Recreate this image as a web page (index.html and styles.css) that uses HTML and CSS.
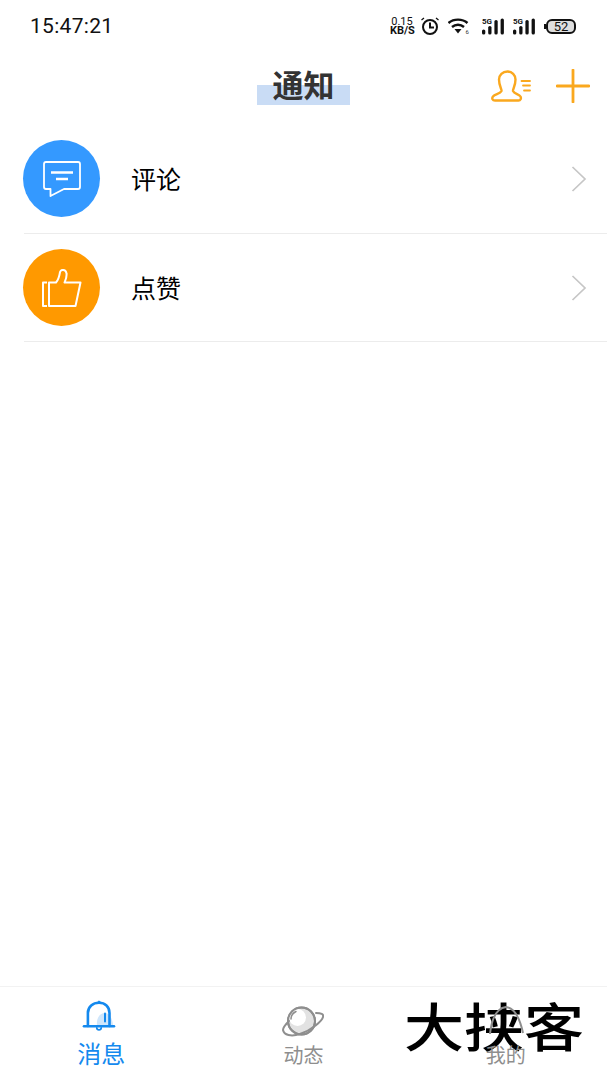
FILE: index.html
```html
<!DOCTYPE html>
<html>
<head>
  <title>通知</title>
  <meta name="viewport" content="width=device-width, initial-scale=1">
  <link rel="stylesheet" href="styles.css">
</head>
<body>
  <div class="page">
    <div class="status-bar">
      <span class="time">15:47:21</span>
      <div class="status-icons">
        <span class="speed">0.15<br><b>KB/S</b></span>
        <svg class="alarm" width="18" height="18" viewBox="0 0 18 18" fill="none" stroke="#111" stroke-width="2">
          <circle cx="9" cy="10" r="7"/>
          <path d="M9 5.500V10.500H13"/>
          <path d="M0.500 3L3 1M17.500 3L15 1" stroke-width="1.300"/>
        </svg>
        <svg class="wifi" width="22" height="17" viewBox="0 0 22 17" fill="none" stroke="#111" stroke-width="2.400">
          <path d="M0.500 5C5.500 0.500 14.500 0.500 19.500 5"/>
          <path d="M4 9C7.500 6 12.500 6 16 9"/>
          <path d="M6.500 11H13.500L10 15.500Z" fill="#111" stroke="none"/>
          <text x="17.500" y="16" class="wifi-label" fill="#333" stroke="none">6</text>
        </svg>
        <svg class="signal" width="22" height="17" viewBox="0 0 22 17">
          <text x="0" y="6" class="sig-label">5G</text>
          <rect x="0" y="11.500" width="3.300" height="5" rx="1.600"/>
          <rect x="6.200" y="8" width="3.300" height="8.500" rx="1.600"/>
          <rect x="12.400" y="2" width="3.300" height="14.500" rx="1.600"/>
          <rect x="18.600" y="0.500" width="3.300" height="16" rx="1.600"/>
        </svg>
        <svg class="signal signal-second" width="22" height="17" viewBox="0 0 22 17">
          <text x="0" y="6" class="sig-label">5G</text>
          <rect x="0" y="11.500" width="3.300" height="5" rx="1.600"/>
          <rect x="6.200" y="8" width="3.300" height="8.500" rx="1.600"/>
          <rect x="12.400" y="2" width="3.300" height="14.500" rx="1.600"/>
          <rect x="18.600" y="0.500" width="3.300" height="16" rx="1.600"/>
        </svg>
        <span class="battery"><span class="battery-num">52</span></span>
      </div>
    </div>

    <div class="header">
      <h1 class="title"><span>通知</span></h1>
      <div class="header-actions">
        <svg width="40" height="33" viewBox="0 0 40 33" fill="none" stroke="#faa81e" stroke-width="2.400" stroke-linecap="round" stroke-linejoin="round">
          <path d="M4 30.500C1.500 30.500 0.500 28.500 2 26.500C4 24 9 24 10.500 21C11 19.500 8 16 8 9.500C8 5 11.500 1.500 16.500 1.500C21 1.500 24.500 5 24.500 9.500C24.500 16 21.500 19.500 22 21C23.500 24 28 24 29.500 26.500C30.500 28.500 29.500 30.500 27.500 30.500Z"/>
          <path d="M30.500 11H39M32 15.500H39M33 20.500H39" stroke-width="1.800"/>
        </svg>
        <svg width="34" height="34" viewBox="0 0 34 34" fill="none" stroke="#faa81e" stroke-width="2.800" stroke-linecap="round">
          <path d="M17 1V33M1 17H33"/>
        </svg>
      </div>
    </div>

    <div class="list">
      <div class="row">
        <div class="badge badge-blue">
          <svg width="38" height="36" viewBox="0 0 38 36" fill="none" stroke="#fff" stroke-width="1.800" stroke-linejoin="round">
            <path d="M3 1H35Q37 1 37 3V26Q37 28 35 28H21L7.500 35V28H3Q1 28 1 26V3Q1 1 3 1Z"/>
            <path d="M8 11.500H30M13 18H25" stroke-width="2.400"/>
          </svg>
        </div>
        <span class="row-label">评论</span>
        <svg class="chevron" width="16" height="26" viewBox="0 0 16 26" fill="none" stroke="#c6c6c6" stroke-width="1.700">
          <path d="M1.500 1L14 13L1.500 25"/>
        </svg>
      </div>
      <div class="row">
        <div class="badge badge-orange">
          <svg width="40" height="38" viewBox="0 0 40 38" fill="none" stroke="#fff" stroke-width="2" stroke-linejoin="round">
            <path d="M5 13.500H1V37H5"/>
            <path d="M7 13.500H14C17 10 17.500 6 18 3C19 0 24 0 24.500 4.500C25 8 23.500 11 22.500 13.500H38.500L33.500 37H7Z"/>
          </svg>
        </div>
        <span class="row-label">点赞</span>
        <svg class="chevron" width="16" height="26" viewBox="0 0 16 26" fill="none" stroke="#c6c6c6" stroke-width="1.700">
          <path d="M1.500 1L14 13L1.500 25"/>
        </svg>
      </div>
    </div>

    <div class="tabbar">
      <span class="watermark">大挟客</span>
      <div class="tab tab-active">
        <svg class="bell" width="34" height="34" viewBox="0 0 34 34" fill="none" stroke="#1489ee" stroke-width="2.600" stroke-linecap="round">
          <path d="M15 26C14 18 18 13 23 13C28 13 31 20 31 26Z" fill="#cfe6fb" stroke="none"/>
          <path d="M5.900 26V13C5.900 6.500 11 2.800 17 2.800C23 2.800 27.500 6.500 27.500 13V26"/>
          <path d="M2 26.200H32"/>
          <path d="M23 13.500V21.500" stroke-width="2"/>
          <circle cx="17" cy="1.800" r="0.800" fill="#1489ee" stroke-width="1"/>
          <path d="M14.800 28C15 30.500 19 30.500 19.200 28" stroke-width="1.800"/>
        </svg>
        <span class="tab-label">消息</span>
      </div>
      <div class="tab tab-mid">
        <svg width="42" height="34" viewBox="0 0 42 34" fill="none" stroke="#8e8e8e" stroke-width="2">
          <circle cx="19.500" cy="16" r="13.500" fill="#e2e2e2"/>
          <circle cx="15.500" cy="12.500" r="8.500" fill="#fff" stroke="none"/>
          <circle cx="19.500" cy="16" r="13.500"/>
          <path d="M34 8C39 8 42 9 41 12C40 16 30 25 18 29C9 32 2 30 1 25C1 22 4 19 7 16" stroke-linecap="round"/>
          <path d="M9 14C9 11 11 8 14 6.500" stroke-width="1.500" stroke-linecap="round"/>
        </svg>
        <span class="tab-label">动态</span>
      </div>
      <div class="tab tab-mid">
        <svg width="42" height="34" viewBox="0 0 42 34" fill="none" stroke="#8e8e8e" stroke-width="2">
          <path d="M5 29C7 11 12 3 21 2C30 3 35 14 38 28"/>
        </svg>
        <span class="tab-label">我的</span>
      </div>
    </div>
  </div>
</body>
</html>
```

FILE: styles.css
```css
* {
  box-sizing: border-box;
}

body {
  margin: 0;
  background: #fff;
  font-family: "Noto Sans CJK SC", "Noto Sans", sans-serif;
}

.page {
  display: flex;
  flex-direction: column;
  height: 1080px;
  overflow: hidden;
}

.status-bar {
  display: flex;
  align-items: center;
  justify-content: space-between;
  height: 52px;
  padding: 0 31px 0 30px;
}

.time {
  font-family: Roboto, sans-serif;
  font-size: 21px;
  color: #111;
  letter-spacing: 0.3px;
}

.status-icons {
  display: flex;
  align-items: center;
}

.speed {
  width: 24px;
  font-family: Roboto, sans-serif;
  font-size: 11px;
  line-height: 9px;
  text-align: center;
  color: #111;
}

.alarm {
  margin-left: 7px;
}

.wifi {
  margin-left: 9px;
}

.wifi-label {
  font-family: Roboto, sans-serif;
  font-size: 6px;
}

.signal {
  margin-left: 12px;
  fill: #111;
}

.signal-second {
  margin-left: 9px;
}

.sig-label {
  font-family: Roboto, sans-serif;
  font-size: 8px;
  font-weight: 700;
}

.battery {
  position: relative;
  display: flex;
  align-items: center;
  justify-content: center;
  width: 30px;
  height: 15px;
  margin-left: 11px;
  background: #dedede;
  border: 2px solid #111;
  border-radius: 6px;
}

.battery::before {
  content: "";
  position: absolute;
  left: -4px;
  top: 3px;
  width: 2px;
  height: 5px;
  background: #111;
}

.battery-num {
  font-family: Roboto, sans-serif;
  font-size: 13px;
  line-height: 11px;
  color: #111;
}

.header {
  position: relative;
  display: flex;
  align-items: center;
  justify-content: center;
  height: 68px;
}

.title {
  position: relative;
  margin: 0;
  font-size: 31px;
  font-weight: 700;
  line-height: 68px;
  color: #333;
  transform: translateY(-2px);
}

.title::before {
  content: "";
  position: absolute;
  left: -15.500px;
  right: -15.500px;
  top: 35px;
  height: 20px;
  background: #c9dcf5;
}

.title span {
  position: relative;
}

.header-actions {
  position: absolute;
  right: 17px;
  top: 17px;
  display: flex;
  align-items: center;
  gap: 25px;
}

.list {
  flex: 1;
  padding-top: 6px;
}

.row {
  display: flex;
  align-items: center;
  height: 108px;
  margin-left: 24px;
  border-bottom: 1px solid #ececec;
}

.row:first-child {
  padding-bottom: 2px;
}

.badge {
  display: flex;
  align-items: center;
  justify-content: center;
  width: 77px;
  height: 77px;
  margin-left: -1px;
  border-radius: 50%;
}

.badge-blue {
  background: #3499ff;
}

.badge-orange {
  background: #ff9900;
}

.row-label {
  flex: 1;
  margin-left: 31px;
  margin-bottom: 2px;
  font-size: 25px;
  color: #000;
}

.chevron {
  margin-right: 20px;
}

.tabbar {
  position: relative;
  display: grid;
  grid-template-columns: repeat(3, 1fr);
  height: 94px;
  border-top: 1px solid #f2f2f2;
}

.tab {
  position: relative;
  display: flex;
  flex-direction: column;
  align-items: center;
}

.tab-active {
  padding-top: 13px;
  color: #1489ee;
}

.tab-mid {
  padding-top: 18px;
  color: #8e8e8e;
}

.tab-label {
  margin-top: 2px;
  font-size: 20px;
  line-height: 28px;
}

.tab-active .bell {
  margin-right: 4px;
}

.tab-active .tab-label {
  margin-top: 3px;
  font-size: 24px;
  line-height: 32px;
}

.watermark {
  position: absolute;
  left: 404px;
  top: 10px;
  font-size: 60px;
  font-weight: 500;
  line-height: 62px;
  color: #000;
  transform: scaleY(0.88);
  transform-origin: top;
}
```
